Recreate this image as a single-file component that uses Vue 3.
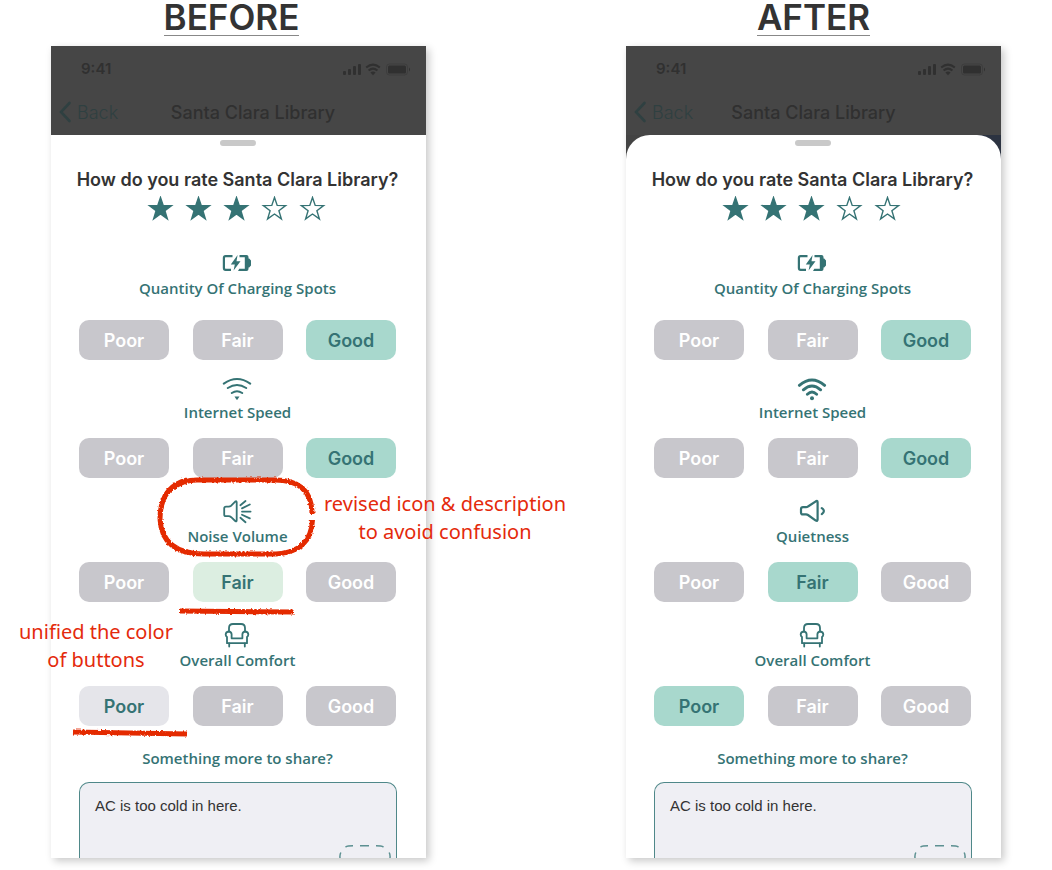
<script setup>
import { reactive } from 'vue'

const levels = ['Poor', 'Fair', 'Good']

const panels = reactive([
  {
    id: 'before',
    heading: 'BEFORE',
    stars: 3,
    comment: 'AC is too cold in here.',
    topics: [
      { label: 'Quantity Of Charging Spots', icon: 'battery', value: 'Good', tone: 'mint' },
      { label: 'Internet Speed', icon: 'wifi-thin', value: 'Good', tone: 'mint' },
      { label: 'Noise Volume', icon: 'noise', value: 'Fair', tone: 'pale' },
      { label: 'Overall Comfort', icon: 'chair', value: 'Poor', tone: 'light' },
    ],
  },
  {
    id: 'after',
    heading: 'AFTER',
    stars: 3,
    comment: 'AC is too cold in here.',
    topics: [
      { label: 'Quantity Of Charging Spots', icon: 'battery', value: 'Good', tone: 'mint' },
      { label: 'Internet Speed', icon: 'wifi-bold', value: 'Good', tone: 'mint' },
      { label: 'Quietness', icon: 'quiet', value: 'Fair', tone: 'mint' },
      { label: 'Overall Comfort', icon: 'chair', value: 'Poor', tone: 'mint' },
    ],
  },
])
</script>

<template>
  <main class="board">
    <section v-for="panel in panels" :key="panel.id" class="column" :class="panel.id">
      <h1 class="heading"><span>{{ panel.heading }}</span></h1>

      <div class="stage">
        <article class="phone">
          <header class="topbar">
            <div class="status">
              <span class="time">9:41</span>
              <svg class="signals" viewBox="0 0 68 14" aria-hidden="true">
                <g fill="currentColor">
                  <rect x="0" y="9" width="3" height="4" rx="1" />
                  <rect x="5" y="7" width="3" height="6" rx="1" />
                  <rect x="10" y="4" width="3" height="9" rx="1" />
                  <rect x="15" y="2" width="3" height="11" rx="1" />
                  <path d="M30 13.2 L27.4 10.4 Q30 8.4 32.6 10.4 Z" />
                  <rect x="45" y="3.500" width="18" height="8" rx="1.500" />
                  <path d="M66 5.500 Q68 7.500 66 9.500 Z" />
                </g>
                <g fill="none" stroke="currentColor" stroke-width="2">
                  <path d="M23.200 5.600 Q30 -0.400 36.800 5.600" />
                  <path d="M25.600 8.600 Q30 4.600 34.400 8.600" />
                  <rect x="43.500" y="2" width="21" height="11" rx="3" stroke-width="1" opacity=".4" />
                </g>
              </svg>
            </div>
            <nav class="navbar">
              <a class="back" href="#">
                <svg viewBox="0 0 14 22" aria-hidden="true"><path d="M10.500 2 L2 11 L10.500 20" /></svg>
                <span>Back</span>
              </a>
              <span class="place">Santa Clara Library</span>
            </nav>
          </header>

          <div class="backdrop">
            <div class="sheet">
              <div class="handle"></div>
              <h2 class="question">How do you rate Santa Clara Library?</h2>
              <div class="stars">
                <button
                  v-for="n in 5"
                  :key="n"
                  type="button"
                  class="star"
                  :class="{ filled: n <= panel.stars }"
                  :aria-label="`${n} stars`"
                  @click="panel.stars = n"
                >
                  <svg viewBox="0 0 38 26">
                    <path d="M17.500 1.500 L20.200 9.400 L28.600 9.600 L21.900 14.700 L24.400 22.900 L17.500 18 L10.600 22.900 L13.100 14.700 L6.400 9.600 L14.800 9.400 Z" />
                  </svg>
                </button>
              </div>

              <section v-for="topic in panel.topics" :key="topic.label" class="topic">
                <svg class="icon" viewBox="0 0 31 28" aria-hidden="true">
                  <template v-if="topic.icon === 'battery'">
                    <path d="M10.500 6.200 H3.600 Q1.900 6.200 1.900 8 V18 Q1.900 19.800 3.600 19.800 H9" stroke-width="2.200" stroke-linecap="butt" />
                    <path d="M17.500 5 H24.500 Q26.500 5 26.500 7 V8.500 H27.200 L29 10.500 V15.500 L27.200 17.500 H26.500 V19 Q26.500 21 24.500 21 H16 L17.300 18.700 H22.800 V7.300 H17.500 Z" class="solid" />
                    <path d="M15.600 5 L8.800 14.400 H12.800 L11.600 20.600 L18.500 11.200 H14.500 Z" class="solid" />
                  </template>
                  <template v-else-if="topic.icon === 'wifi-thin'">
                    <path d="M1.800 9.600 Q15 0.600 28.200 9.600 M5.800 14 Q15 8 24.200 14 M9.800 19 Q15 15.600 20.200 19" stroke-width="2" />
                    <path d="M12.500 22.400 H17.500 L15.400 25.800 H14.600 Z" class="solid" />
                  </template>
                  <template v-else-if="topic.icon === 'wifi-bold'">
                    <path d="M2.400 11.400 Q15 0.400 27.600 11.400 M6.400 15.800 Q15 8.200 23.600 15.800 M10.400 20.200 Q15 16 19.600 20.200" stroke-width="2.900" />
                    <circle cx="15" cy="24.200" r="2" class="solid" />
                  </template>
                  <template v-else-if="topic.icon === 'noise'">
                    <path d="M4 8.600 H6.600 Q8 8.600 9.200 7.700 L13.200 3.600 Q14.700 2.500 14.700 4.300 V22.300 Q14.700 24 13.200 23 L9.200 19.200 Q8 18.200 6.600 18.200 H4 Q2.200 18.200 2.200 16.400 V10.400 Q2.200 8.600 4 8.600 Z" />
                    <path d="M18.400 7.200 L23.500 3 M20 10.400 L27.800 6.500 M20 13.600 H28.600 M20 16.700 L27.800 20.400 M18.400 19.800 L23.500 24.200" />
                  </template>
                  <template v-else-if="topic.icon === 'quiet'">
                    <path d="M6 9.200 H9 Q10.200 9.200 11 8.500 L18.800 3.300 Q20.600 2.300 20.600 4.200 V21.600 Q20.600 23.500 18.800 22.600 L11 17 Q10.200 16.400 9 16.400 H6 Q4 16.400 4 14.400 V11.200 Q4 9.200 6 9.200 Z" stroke-width="2.200" />
                    <path d="M24.800 10.200 Q29 13 24.800 16.200" stroke-width="2.200" />
                  </template>
                  <template v-else>
                    <path d="M7 9.400 V6 Q7 2 11 2 H19 Q23 2 23 6 V9.400" />
                    <path d="M9.600 16.300 V12.200 Q9.300 9.500 6.600 9.500 Q3.700 9.800 3.700 12.600 Q3.800 14.200 5 15 V21.200 H25 V15 Q26.200 14.200 26.300 12.600 Q26.300 9.800 23.400 9.500 Q20.700 9.500 20.400 12.200 V16.300 Z" />
                    <path d="M7.200 21.500 V24.500 M22.800 21.500 V24.500" />
                  </template>
                </svg>
                <h3 class="label">{{ topic.label }}</h3>
                <div class="levels">
                  <button
                    v-for="level in levels"
                    :key="level"
                    type="button"
                    class="pill"
                    :class="topic.value === level ? topic.tone : ''"
                    :aria-pressed="topic.value === level"
                    @click="topic.value = level"
                  >{{ level }}</button>
                </div>
              </section>

              <label class="label share" :for="`comment-${panel.id}`">Something more to share?</label>
              <div class="comment">
                <textarea :id="`comment-${panel.id}`" v-model="panel.comment"></textarea>
                <svg class="attach" viewBox="0 0 54 14" aria-hidden="true">
                  <path d="M2 14 Q1.600 11 2.800 8.500 M7.500 3 Q9.500 1.800 15 1.800 M22 1.800 H31 M38 1.800 Q43.500 1.800 45.500 3 M51.200 8.500 Q52.400 11 52 14" />
                </svg>
              </div>
            </div>
          </div>
        </article>

        <template v-if="panel.id === 'before'">
          <svg class="marks" viewBox="0 0 320 290" aria-hidden="true">
            <defs>
              <filter id="crayon" x="0" y="0" width="320" height="290" filterUnits="userSpaceOnUse">
                <feTurbulence type="fractalNoise" baseFrequency="0.5" numOctaves="2" seed="4" result="noise" />
                <feDisplacementMap in="SourceGraphic" in2="noise" scale="3" xChannelSelector="R" yChannelSelector="G" />
              </filter>
            </defs>
            <g filter="url(#crayon)">
              <path d="M116 16 Q89 23 89 55 Q91 90 133 90 H205 Q240 88 241.500 56" />
              <path d="M241 50 Q241 16 204 16 H126 Q112 16 102 24" />
              <path d="M109 147 L223 148" />
              <path d="M2 268 L116 270" />
            </g>
          </svg>
          <p class="note revised">revised icon &amp; description<br />to avoid confusion</p>
          <p class="note unified">unified the color<br />of buttons</p>
        </template>
      </div>
    </section>
  </main>
</template>

<style>
body {
  margin: 0;
  background: #fff;
}
</style>

<style scoped>
.board {
  display: grid;
  grid-template-columns: repeat(2, minmax(0, 1fr));
  gap: 200px;
  padding: 0 51px 12px;
  font-family: Inter, "Liberation Sans", sans-serif;
  color: #333;
}

.heading {
  margin: 0;
  height: 46px;
  text-align: center;
  font-size: 35px;
  font-weight: 600;
  line-height: 35px;
}

.heading span {
  display: inline-block;
  border-bottom: 1px solid #888;
}

.before .heading {
  padding-right: 14px;
}

.stage {
  position: relative;
}

.phone {
  overflow: hidden;
  background: #fff;
  box-shadow: 3px 3px 8px rgba(0, 0, 0, 0.22);
}

.topbar {
  height: 89px;
  background: #464646;
  color: #303030;
}

.status {
  display: flex;
  justify-content: space-between;
  align-items: center;
  height: 45px;
  padding: 0 15px 0 30px;
}

.time {
  font-size: 15px;
  font-weight: 600;
}

.signals {
  width: 68px;
  height: 14px;
}

.navbar {
  display: grid;
  align-items: center;
  height: 42px;
  padding-left: 8px;
}

.back,
.place {
  grid-area: 1 / 1;
}

.back {
  display: flex;
  align-items: center;
  gap: 4px;
  justify-self: start;
  color: #2f4041;
  font-size: 18px;
  font-weight: 300;
  text-decoration: none;
}

.back svg {
  width: 14px;
  height: 22px;
  fill: none;
  stroke: currentColor;
  stroke-width: 2.6;
  stroke-linecap: round;
}

.place {
  justify-self: center;
  padding-right: 8px;
  font-size: 18px;
  font-weight: 500;
}

.before .place {
  padding: 0 0 0 21px;
}

.backdrop {
  background: linear-gradient(90deg, #434343 75%, #2c3341 75%);
}

.sheet {
  display: flex;
  flex-direction: column;
  padding: 5px 30px 0 28px;
  background: #fff;
}

.after .sheet {
  border-radius: 24px 24px 0 0;
}

.handle {
  align-self: center;
  width: 36px;
  height: 6px;
  border-radius: 3px;
  background: #c9c9c9;
}

.question {
  align-self: center;
  margin: 22px 0 0;
  font-size: 18px;
  font-weight: 600;
  line-height: 24px;
  white-space: nowrap;
}

.stars {
  display: flex;
  justify-content: center;
  margin-top: 4px;
}

.star {
  width: 38px;
  height: 26px;
  padding: 0;
  border: 0;
  background: none;
}

.star svg {
  display: block;
  fill: none;
  stroke: #357374;
  stroke-width: 1.4;
}

.star.filled svg {
  fill: #357374;
}

.topic {
  display: flex;
  flex-direction: column;
  margin-top: 20px;
}

.stars + .topic {
  margin-top: 28px;
}

.stars + .topic + .topic {
  margin-top: 14px;
}

.icon {
  align-self: center;
  width: 31px;
  height: 28px;
  fill: none;
  stroke: #357374;
  stroke-width: 1.8;
  stroke-linecap: round;
  stroke-linejoin: round;
}

.icon .solid {
  fill: #357374;
  stroke: none;
}

.label {
  align-self: center;
  margin: 0;
  color: #357374;
  font-family: "Open Sans", "Noto Sans", sans-serif;
  font-size: 15px;
  font-weight: 650;
  line-height: 20px;
  white-space: nowrap;
}

.levels {
  display: flex;
  justify-content: space-between;
  margin-top: 16px;
}

.stars + .topic .levels {
  margin-top: 22px;
}

.pill {
  width: 90px;
  height: 40px;
  padding: 0;
  border: 0;
  border-radius: 10px;
  background: #c8c7cc;
  color: #fff;
  font-family: inherit;
  font-size: 18px;
  font-weight: 600;
}

.pill.mint,
.pill.pale,
.pill.light {
  color: #357374;
}

.pill.mint {
  background: #a8d8cd;
}

.pill.pale {
  background: #dceee1;
}

.pill.light {
  background: #e5e5ea;
}

.share {
  margin-top: 22px;
}

.comment {
  position: relative;
  margin-top: 14px;
  margin-right: -1px;
}

textarea {
  display: block;
  box-sizing: border-box;
  width: 100%;
  height: 76px;
  padding: 12px 15px;
  border: 1px solid #4f8889;
  border-bottom: 0;
  border-radius: 10px 10px 0 0;
  background: #efeff4;
  color: #333;
  font-family: "Liberation Sans", Arial, sans-serif;
  font-size: 15px;
  line-height: 22px;
  resize: none;
  overflow: hidden;
}

.attach {
  position: absolute;
  right: 5px;
  bottom: 0;
  width: 54px;
  height: 14px;
  fill: none;
  stroke: #5c9091;
  stroke-width: 1.5;
}

.marks {
  position: absolute;
  top: 418px;
  left: 20px;
  width: 320px;
  height: 290px;
  fill: none;
  stroke: #e42a06;
  stroke-width: 5;
  pointer-events: none;
}

.note {
  position: absolute;
  margin: 0;
  color: #e42a0c;
  font-family: "Noto Sans", "Open Sans", sans-serif;
  font-size: 20px;
  line-height: 28px;
  text-align: center;
  white-space: nowrap;
}

.revised {
  top: 444px;
  left: 273px;
}

.unified {
  top: 572px;
  left: -32px;
}
</style>
